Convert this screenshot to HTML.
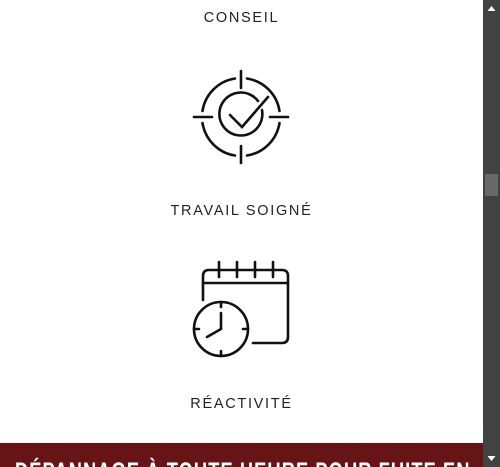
<!DOCTYPE html>
<html><head><meta charset="utf-8"><style>
html,body{margin:0;padding:0;width:500px;height:467px;overflow:hidden;background:#fff;}
.t{position:absolute;left:0;width:483px;text-align:center;font-family:"Liberation Sans",sans-serif;font-size:14.5px;letter-spacing:1.7px;color:#222;}
#band{position:absolute;left:0;top:443px;width:483px;height:24px;background:#661416;overflow:hidden;}
#band div{position:absolute;left:15px;top:17px;color:#fff;font-family:"Liberation Sans Narrow","Liberation Sans",sans-serif;font-weight:bold;font-size:25px;letter-spacing:1.5px;white-space:nowrap;line-height:25px;transform:scaleX(0.73);transform-origin:left;}
#sb{position:absolute;left:483px;top:0;width:17px;height:467px;background:#424242;}
#thumb{position:absolute;left:485px;top:174px;width:13px;height:22px;background:#686868;}
</style></head><body>
<div class="t" style="top:10px">CONSEIL</div>
<div class="t" style="top:203px">TRAVAIL SOIGNÉ</div>
<div class="t" style="top:396px">RÉACTIVITÉ</div>
<svg style="position:absolute;left:0;top:0" width="483" height="443" fill="none" stroke="#111" stroke-width="2.6" stroke-linecap="round">
<path d="M202.5 111 A39 39 0 0 1 235 78.5"/>
<path d="M247 78.5 A39 39 0 0 1 279.5 111"/>
<path d="M279.5 123 A39 39 0 0 1 247 155.5"/>
<path d="M235 155.5 A39 39 0 0 1 202.5 123"/>
<path d="M241 71V88M241 146V163M194 117H212M270 117H288"/>
<path d="M258 101 A21.5 21.5 0 1 0 262 110"/>
<path d="M230 115L242 127L268 97"/>
<path d="M203 300V276Q203 270 209 270H282Q288 270 288 276V337Q288 343 282 343H253"/>
<path d="M203 283H288"/>
<path d="M219 262V277M237 262V277M255 262V277M273 262V277"/>
<circle cx="221" cy="329" r="27"/>
<path d="M221 302V307M221 351V356M194 329H199M243 329H248"/>
<path d="M221 313V329L207 337"/>
</svg>
<div id="band"><div>DÉPANNAGE À TOUTE HEURE POUR FUITE EN</div></div>
<div id="sb"></div>
<div id="thumb"></div>
<svg style="position:absolute;left:483px;top:0" width="17" height="467">
<path d="M4.5 11L8.5 6L12.5 11Z" fill="#fff"/>
<path d="M4.5 456L8.5 461L12.5 456Z" fill="#fff"/>
</svg>
</body></html>
